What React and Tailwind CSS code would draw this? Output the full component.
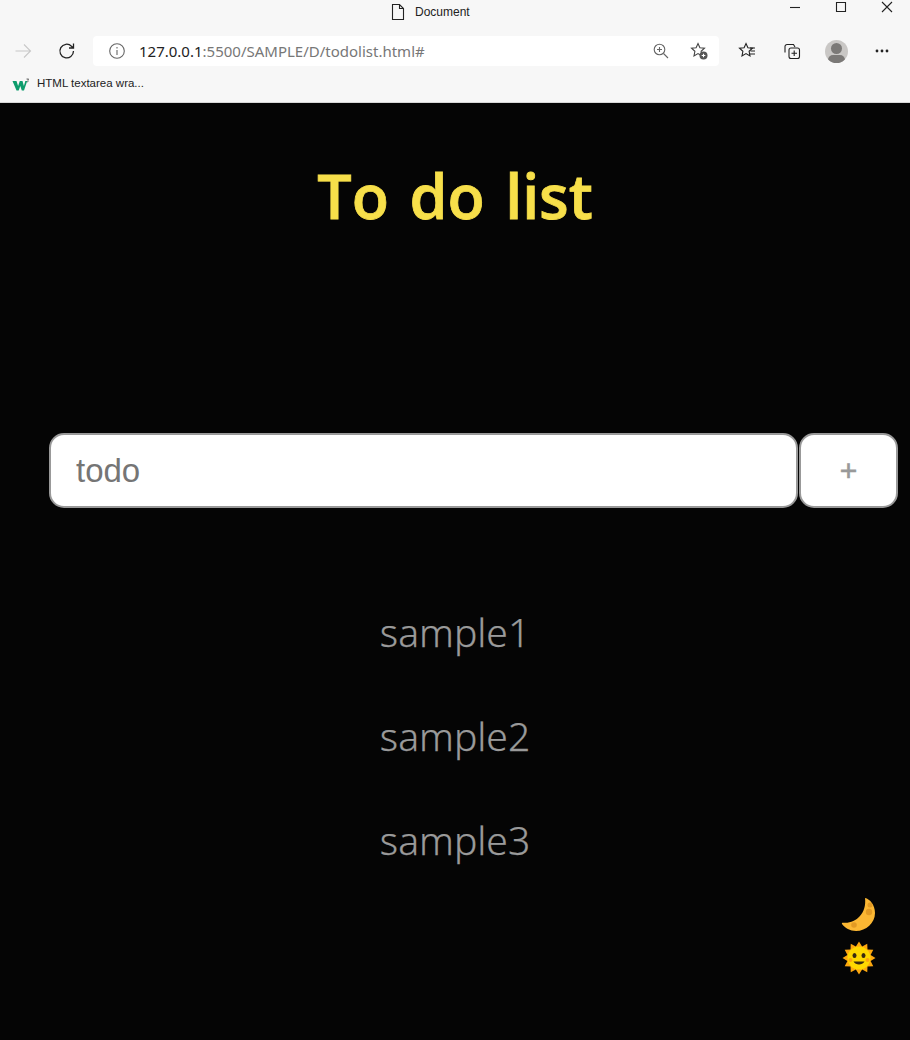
import React from "react";

const Ic = ({ w = 20, h = 20, vb = "0 0 20 20", children, className = "" }) => (
  <svg width={w} height={h} viewBox={vb} fill="none" stroke="currentColor" strokeWidth="1.1" className={className}>{children}</svg>
);

const Star = "M9 2.5l1.9 4.200 4.600.5-3.400 3.100.9 4.600L9 12.600l-4 2.300.9-4.600-3.400-3.100 4.600-.5z";

function Chrome() {
  return (
    <div className="h-[103px] bg-[#f7f7f7] border-b border-[#d8d8d8] flex flex-col text-[#222] font-['Noto_Sans',sans-serif] shrink-0">
      <div className="h-[35px] flex items-start relative shrink-0">
        <div className="pl-[390px] flex items-center gap-[9px] pt-[3px]">
          <Ic w={16} h={18} vb="0 0 16 18" className="text-[#222]">
            <path d="M2.5 1.500h7l4 4v11h-11z M9.500 1.500v4h4" />
          </Ic>
          <span className="text-[12px] leading-[18px] font-['Liberation_Sans',sans-serif]">Document</span>
        </div>
        <div className="absolute right-0 top-0 flex items-center text-[#222]">
          <div className="w-[46px] h-[14px] flex justify-center items-center"><Ic w={12} h={12} vb="0 0 12 12"><path d="M1 6.500h10" /></Ic></div>
          <div className="w-[46px] h-[14px] flex justify-center items-center"><Ic w={12} h={12} vb="0 0 12 12"><path d="M1.500 1.500h9v9h-9z" /></Ic></div>
          <div className="w-[46px] h-[14px] flex justify-center items-center"><Ic w={12} h={12} vb="0 0 12 12"><path d="M1 1l10 10M11 1L1 11" /></Ic></div>
        </div>
      </div>
      <div className="h-[32px] flex items-center shrink-0">
        <div className="w-[45px] flex justify-center text-[#c8c8c8]">
          <Ic w={18} h={18} vb="0 0 18 18"><path d="M1.500 9h15M10 2.500L16.500 9 10 15.500" /></Ic>
        </div>
        <div className="w-[44px] flex justify-center text-[#222]">
          <Ic w={20} h={20} vb="0 0 20 20" ><path strokeWidth="1.3" d="M16.500 10a6.800 6.800 0 1 1-2-4.800L16.500 7M16.500 2.500V7H12" /></Ic>
        </div>
        <div className="w-[626px] h-[30px] bg-white rounded-[4px] flex items-center ml-[4px] shrink-0">
          <div className="w-[46px] flex justify-center text-[#666] pl-[2px]">
            <Ic w={18} h={18} vb="0 0 18 18"><circle cx="9" cy="9" r="7.300" /><path d="M9 8v5M9 5v1.400" /></Ic>
          </div>
          <span className="text-[15px] font-['Noto_Sans',sans-serif] text-[#777] whitespace-nowrap"><span className="text-[#222]">127.0.0.1</span>:5500/SAMPLE/D/todolist.html#</span>
          <div className="ml-auto flex items-center pr-[1px]">
            <div className="w-[38px] flex justify-center text-[#666]">
              <Ic w={18} h={18} vb="0 0 18 18"><circle cx="7.500" cy="7.500" r="5.300" /><path d="M5 7.500h5M7.500 5v5M11.500 11.500L16 16" /></Ic>
            </div>
            <div className="w-[38px] flex justify-center text-[#444]">
              <Ic w={20} h={20} vb="0 0 20 20"><path d={Star} /><circle cx="14.500" cy="14.500" r="4" fill="#555" stroke="none" /><path d="M12.700 14.500h3.600M14.500 12.700v3.600" stroke="#fff" /></Ic>
            </div>
          </div>
        </div>
        <div className="w-[44px] flex justify-center ml-[6px] text-[#222]">
          <Ic w={20} h={20} vb="0 0 20 20"><path d={Star} /><path d="M13 7h5M13.500 10h4.500M12.500 13h5.500" /></Ic>
        </div>
        <div className="w-[45px] flex justify-center text-[#222]">
          <Ic w={20} h={20} vb="0 0 20 20"><path d="M3 11.500V5.500a2 2 0 0 1 2-2h6.500l1.500 2.500" /><rect x="7" y="7" width="10.500" height="10.500" rx="2" /><path d="M9.500 12.200h5.500M12.200 9.500V15" /></Ic>
        </div>
        <div className="w-[45px] flex justify-center">
          <div className="w-[23px] h-[23px] rounded-full bg-[#c9c7c5] overflow-hidden flex flex-col items-center">
            <div className="w-[11px] h-[11px] rounded-full bg-[#7b7977] mt-[3px] shrink-0" />
            <div className="w-[17px] h-[10px] rounded-full bg-[#7b7977] mt-[1px] shrink-0" />
          </div>
        </div>
        <div className="w-[46px] flex justify-center text-[#222]">
          <svg width="16" height="4" viewBox="0 0 16 4" fill="currentColor"><circle cx="3" cy="2" r="1.400" /><circle cx="8" cy="2" r="1.400" /><circle cx="13" cy="2" r="1.400" /></svg>
        </div>
      </div>
      <div className="h-[35px] flex items-center pl-[12px] gap-[7px] pb-[1px]">
        <svg width="18" height="13" viewBox="0 0 18 13">
          <path d="M0.500 3h4l1.600 5 1.700-5h2.700l1.400 5 1.400-5h1.900L12 12.500H9.800L8.300 8l-1.600 4.500H4.500z" fill="#0d9c6c" />
          <path d="M14.500 1h2.200l-1 1.100c.8.300.8 1.800-.6 1.900" stroke="#333" strokeWidth="0.7" fill="none" />
        </svg>
        <span className="text-[11.500px] font-['Liberation_Sans',sans-serif] text-[#222]">HTML textarea wra...</span>
      </div>
    </div>
  );
}

const Moon = () => (
  <svg width="35" height="36" viewBox="0 0 35 36">
    <path d="M24 1c5 1 10 7 10 15 0 10-9 18-19 18C9 34 4 31 1 27c-.5-1 .3-1.500 1.500-1.300C14 27 26 17 24 1z" fill="#fbb733" />
    <circle cx="29" cy="8" r="2.500" fill="#e29a24" /><circle cx="28" cy="15" r="3.200" fill="#e29a24" /><circle cx="13" cy="28" r="2.800" fill="#e29a24" />
  </svg>
);

const Sun = () => {
  const pts = [];
  for (let i = 0; i < 24; i++) {
    const r = i % 2 === 0 ? 16.500 : 12;
    const a = (i / 24) * Math.PI * 2 - Math.PI / 2;
    pts.push(`${17 + r * Math.cos(a)},${17 + r * Math.sin(a)}`);
  }
  return (
    <svg width="34" height="34" viewBox="0 0 34 34">
      <polygon points={pts.join(" ")} fill="#fca70f" />
      <circle cx="17" cy="17" r="11.500" fill="#ffd800" />
      <ellipse cx="12.500" cy="14.500" rx="2" ry="2.500" fill="#3a2a10" />
      <ellipse cx="21.500" cy="14.500" rx="2" ry="2.500" fill="#3a2a10" />
      <path d="M11.500 20.500c2 4 9 4 11 0z" fill="#3a2a10" />
      <circle cx="8.500" cy="19" r="2" fill="#fda50f" /><circle cx="25.500" cy="19" r="2" fill="#fda50f" />
    </svg>
  );
};

export default function App() {
  return (
    <div className="w-[910px] h-[1040px] overflow-hidden flex flex-col bg-[#050505]">
      <Chrome />
      <main className="flex-1 flex flex-col font-['Noto_Sans',sans-serif] relative">
        <h1 className="h-[186px] pt-[50px] text-center text-[61px] leading-[86px] font-semibold text-[#f7df4a] font-['Open_Sans',sans-serif] tracking-[-0.1px] [word-spacing:5px] [-webkit-text-stroke:0.8px_#f7df4a]">To do list</h1>
        <div className="mt-[144px] flex pl-[49px]">
          <div className="w-[749px] h-[75px] bg-white border-2 border-[#999] rounded-[15px] flex items-center pl-[25px] text-[33px] font-['Liberation_Sans',sans-serif] text-[#757575]">todo</div>
          <div className="ml-[1px] w-[99px] h-[75px] bg-white border-2 border-[#999] rounded-[15px] flex items-center justify-center text-[30px] font-['Liberation_Sans',sans-serif] [-webkit-text-stroke:0.6px_#999] text-[#999]">+</div>
        </div>
        <ul className="mt-[84px] flex flex-col items-center gap-[24px] text-[#9a9a9a] text-[39px] leading-[80px] font-light font-['Noto_Sans',sans-serif] [-webkit-text-stroke:0.25px_#9a9a9a]">
          <li>sample1</li>
          <li>sample2</li>
          <li>sample3</li>
        </ul>
        <div className="absolute right-[34px] top-[794px] flex flex-col items-center gap-[8px]">
          <Moon />
          <Sun />
        </div>
      </main>
    </div>
  );
}
